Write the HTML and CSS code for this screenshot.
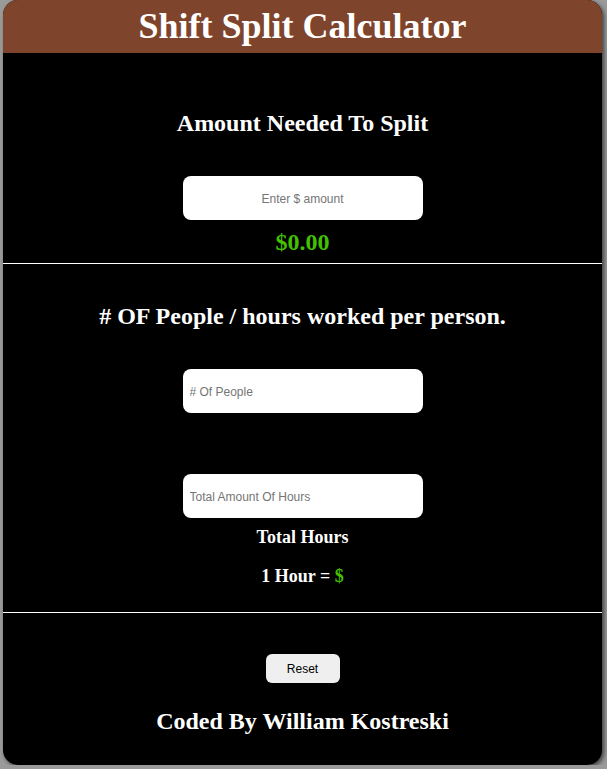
FILE: index.html
```html
<!DOCTYPE html>
<html>
<head>
<meta charset="utf-8">
<link rel="stylesheet" href="styles.css">
</head>
<body>
<div class="card">
  <header class="head"><h1 class="title">Shift Split Calculator</h1></header>
  <section class="sec sec-amount">
    <h2 class="heading">Amount Needed To Split</h2>
    <input class="field field-center" type="text" placeholder="Enter $ amount">
    <div class="money">$0.00</div>
  </section>
  <hr class="rule">
  <section class="sec sec-people">
    <h2 class="heading">&#35; OF People / hours worked per person.</h2>
    <input class="field" type="text" placeholder="# Of People">
    <input class="field field-second" type="text" placeholder="Total Amount Of Hours">
    <div class="small">Total Hours</div>
    <div class="small small-rate">1 Hour = <span class="green">$</span></div>
  </section>
  <hr class="rule">
  <section class="sec sec-foot">
    <button class="btn">Reset</button>
    <h2 class="heading credit">Coded By William Kostreski</h2>
  </section>
</div>
</body>
</html>
```
FILE: styles.css
```css
html, body {
  margin: 0;
  padding: 0;
}
body {
  background: #9a9a9a;
  font-family: "Liberation Serif", "Times New Roman", serif;
  color: #fff;
}
.card {
  margin: 0 5px 0 3px;
  height: 765px;
  background: #000;
  border-radius: 15px;
  overflow: hidden;
  box-shadow: 2px 2px 4px rgba(0,0,0,0.6);
  display: flex;
  flex-direction: column;
}
.head {
  background: #7f452c;
  height: 53px;
  display: flex;
  align-items: center;
  justify-content: center;
}
.title {
  margin: 0;
  font-size: 36px;
  font-weight: bold;
  line-height: 42px;
  padding-bottom: 1px;
}
.sec {
  display: flex;
  flex-direction: column;
  align-items: center;
}
.heading {
  margin: 0;
  font-size: 24px;
  line-height: 28px;
  font-weight: bold;
}
.sec-amount {
  padding-top: 56px;
  padding-bottom: 7px;
}
.field {
  box-sizing: border-box;
  width: 240px;
  height: 44px;
  border: none;
  border-radius: 8px;
  background: #fff;
  margin-top: 39px;
  padding: 1px 7px 0;
  font-family: "Liberation Sans", Arial, sans-serif;
  font-size: 12px;
  outline: none;
}
.field::placeholder {
  color: #757575;
}
.field-center {
  text-align: center;
}
.money {
  margin-top: 8px;
  font-size: 24px;
  line-height: 28px;
  font-weight: bold;
  color: #44c000;
}
.rule {
  margin: 0;
  border: none;
  height: 1px;
  background: #fff;
}
.sec-people {
  padding-top: 38px;
  padding-bottom: 25px;
}
.field-second {
  margin-top: 61px;
}
.small {
  margin-top: 9px;
  font-size: 18px;
  line-height: 21px;
  font-weight: bold;
}
.small-rate {
  margin-top: 18px;
}
.green {
  color: #44c000;
}
.sec-foot {
  padding-top: 41px;
}
.btn {
  width: 74px;
  height: 29px;
  border: none;
  border-radius: 6px;
  background: #efefef;
  color: #000;
  font-family: "Liberation Sans", Arial, sans-serif;
  font-size: 12px;
  font-weight: 500;
  padding: 0;
}
.credit {
  margin-top: 24px;
}
```
